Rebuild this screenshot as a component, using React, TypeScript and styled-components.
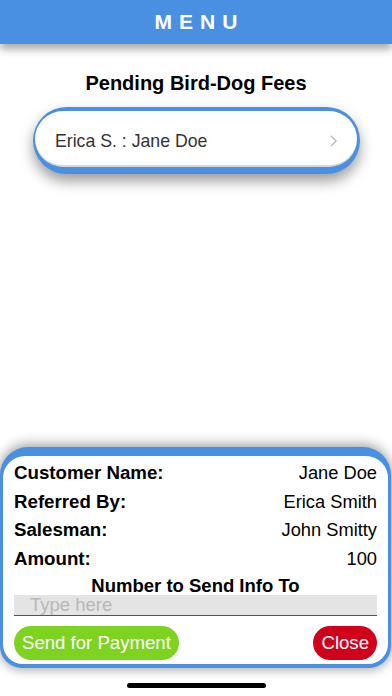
import React from "react"
import styled, { createGlobalStyle } from "styled-components"

// ■■■■■■■■■■■■■■■■■■■■■■■■■■■■■■■■■■■■■■■■■■■■■■■■■■■■■■■■■■■■■■■■■■■■■■■■■■■■■

const BLUE = "#4a90e2"

const GlobalStyle = createGlobalStyle`
	html, body {
		margin: 0;
		padding: 0;
		background: #ffffff;
	}
	body {
		font-family: "Liberation Sans", Arial, sans-serif;
		color: #000;
	}
`

type Row = { label: string; value: string }

const rows: Row[] = [
	{ label: "Customer Name:", value: "Jane Doe" },
	{ label: "Referred By:", value: "Erica Smith" },
	{ label: "Salesman:", value: "John Smitty" },
	{ label: "Amount:", value: "100" },
]

export default function App() {
	return (
		<StyledScreen>
			<GlobalStyle />
			<StyledHeader>MENU</StyledHeader>

			<StyledTitle>Pending Bird-Dog Fees</StyledTitle>

			<StyledCardOuter>
				<StyledCardInner>
					<span>Erica S. : Jane Doe</span>
					<StyledChevron viewBox="0 0 10 16">
						<path d="M2 2 L8 8 L2 14" />
					</StyledChevron>
				</StyledCardInner>
			</StyledCardOuter>

			<StyledSpacer />

			<StyledPanelOuter>
				<StyledPanelInner>
					{rows.map((row) => (
						<StyledRow key={row.label}>
							<StyledLabel>{row.label}</StyledLabel>
							<StyledValue>{row.value}</StyledValue>
						</StyledRow>
					))}
					<StyledSubTitle>Number to Send Info To</StyledSubTitle>
					<StyledInput placeholder="Type here" />
					<StyledButtons>
						<StyledPill $color="#7ed321">Send for Payment</StyledPill>
						<StyledPill $color="#d0021b">Close</StyledPill>
					</StyledButtons>
				</StyledPanelInner>
			</StyledPanelOuter>

			<StyledHomeBar />
		</StyledScreen>
	)
}

// 〓〓〓〓〓〓〓〓〓〓〓〓〓〓〓〓〓〓〓〓〓〓〓〓〓〓〓〓〓〓	STYLED_COMPONENTS

const StyledScreen = styled.div`
	width: 392px;
	height: 696px;
	display: flex;
	flex-direction: column;
	overflow: hidden;
	background: #fff;
`

const StyledHeader = styled.div`
	height: 44px;
	flex-shrink: 0;
	background: ${BLUE};
	color: #fff;
	display: flex;
	align-items: center;
	justify-content: center;
	font-size: 21px;
	font-weight: bold;
	letter-spacing: 7px;
	padding-left: 7px;
	box-shadow: 0 5px 8px rgba(0, 0, 0, 0.35);
	position: relative;
	z-index: 1;
`

const StyledTitle = styled.h2`
	margin: 28px 0 0;
	text-align: center;
	font-size: 20px;
	font-weight: bold;
	line-height: 22px;
`

const StyledCardOuter = styled.div`
	margin: 13px 32px 0 33px;
	background: ${BLUE};
	border-radius: 34px;
	padding: 4px 3px 7px 2px;
	box-shadow: 0 7px 14px rgba(0, 0, 0, 0.4);
`

const StyledCardInner = styled.div`
	height: 56px;
	background: #fff;
	border-radius: 30px;
	border-bottom: 2px solid #d8d8d8;
	display: flex;
	align-items: center;
	justify-content: space-between;
	padding: 6px 19px 0 20px;
	box-sizing: border-box;
	font-size: 17.7px;
	color: #333;
`

const StyledChevron = styled.svg`
	width: 9px;
	height: 14px;
	fill: none;
	stroke: #bbb;
	stroke-width: 1.6;
`

const StyledSpacer = styled.div`
	flex: 1;
`

const StyledPanelOuter = styled.div`
	margin: 0 1px 0 0;
	background: ${BLUE};
	border-radius: 28px 28px 22px 22px;
	padding: 9px 3px 4px 3px;
	box-shadow: 0 -4px 12px rgba(0, 0, 0, 0.3), 0 4px 10px rgba(0, 0, 0, 0.2);
`

const StyledPanelInner = styled.div`
	background: #fff;
	border-radius: 22px 22px 20px 20px;
	padding: 3px 11px 4px 11px;
	display: flex;
	flex-direction: column;
`

const StyledRow = styled.div`
	display: flex;
	justify-content: space-between;
	align-items: center;
	height: 28.5px;
`

const StyledLabel = styled.span`
	font-weight: bold;
	font-size: 18.7px;
`

const StyledValue = styled.span`
	font-weight: normal;
	font-size: 18.3px;
`

const StyledSubTitle = styled.div`
	text-align: center;
	font-weight: bold;
	font-size: 18.5px;
	line-height: 19px;
	margin-top: 3px;
`

const StyledInput = styled.input`
	height: 20px;
	border: none;
	border-bottom: 1px solid #555;
	background: #e4e4e4;
	padding: 0 16px;
	font-family: "Liberation Sans", Arial, sans-serif;
	font-size: 18.5px;
	outline: none;
	&::placeholder {
		color: #b8b8b8;
	}
`

const StyledButtons = styled.div`
	display: flex;
	justify-content: space-between;
	margin-top: 10px;
`

const StyledPill = styled.button<{ $color: string }>`
	height: 34px;
	border: none;
	border-radius: 17px;
	background: ${(p) => p.$color};
	color: #fff;
	font-family: "Liberation Sans", Arial, sans-serif;
	font-size: 18.6px;
	padding: 0 8px;
`

const StyledHomeBar = styled.div`
	width: 139px;
	height: 5px;
	border-radius: 3px;
	background: #000;
	align-self: center;
	margin: 15px 0 8px;
`
